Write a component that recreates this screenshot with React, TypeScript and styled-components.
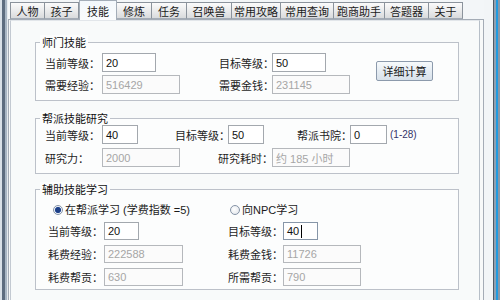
import React from 'react';
import styled, { createGlobalStyle } from 'styled-components';

const GlobalStyle = createGlobalStyle`
  html, body { margin: 0; padding: 0; }
  body {
    width: 500px;
    height: 300px;
    overflow: hidden;
    font-family: "Liberation Sans", "Noto Sans CJK SC", sans-serif;
    font-size: 11px;
    color: #1b1b1b;
    background: #f3f6f8;
  }
`;

const tabs = [
  { name: '人物', w: 35 },
  { name: '孩子', w: 34 },
  { name: '技能', w: 38, active: true },
  { name: '修炼', w: 35 },
  { name: '任务', w: 35 },
  { name: '召唤兽', w: 45 },
  { name: '常用攻略', w: 49 },
  { name: '常用查询', w: 53 },
  { name: '跑商助手', w: 51 },
  { name: '答题器', w: 44 },
  { name: '关于', w: 34 },
];

const App: React.FC = () => {
  return (
    <>
      <GlobalStyle />
      <Window>
        <LeftFrame />
        <Main>
          <TabStrip>
            {tabs.map((t) => (
              <Tab key={t.name} $w={t.w} $active={!!t.active}>
                {t.name}
              </Tab>
            ))}
          </TabStrip>
          <Page>
            <Panel>
              <Group>
                <Legend>师门技能</Legend>
                <GroupBody $top={4} $bottom={6} $left={9}>
                  <FieldGrid>
                    <Label>当前等级：</Label>
                    <Box $w={54}>20</Box>
                    <Label>目标等级：</Label>
                    <Box $w={54}>50</Box>
                    <Label>需要经验：</Label>
                    <Box $w={78} $disabled>516429</Box>
                    <Label>需要金钱：</Label>
                    <Box $w={78} $disabled>231145</Box>
                  </FieldGrid>
                  <CalcButton>详细计算</CalcButton>
                </GroupBody>
              </Group>

              <Group $gap={10}>
                <Legend>帮派技能研究</Legend>
                <GroupColumn $top={0} $bottom={6} $left={9} $rowGap={4}>
                  <Row>
                    <Label $w={57}>当前等级：</Label>
                    <Box $w={36}>40</Box>
                    <Label $w={53} $ml={37}>目标等级：</Label>
                    <Box $w={36}>50</Box>
                    <Label $w={53} $ml={33}>帮派书院：</Label>
                    <Box $w={37}>0</Box>
                    <Hint>(1-28)</Hint>
                  </Row>
                  <Row>
                    <Label $w={57}>研究力：</Label>
                    <Box $w={78} $disabled>2000</Box>
                    <Label $w={54} $ml={38}>研究耗时：</Label>
                    <Box $w={78} $disabled>约 185 小时</Box>
                  </Row>
                </GroupColumn>
              </Group>

              <Group $gap={8}>
                <Legend>辅助技能学习</Legend>
                <GroupColumn $top={7} $bottom={3} $left={12} $rowGap={5}>
                  <RadioRow>
                    <RadioOption $w={177}>
                      <Radio $checked />
                      <span>在帮派学习 (学费指数 =5)</span>
                    </RadioOption>
                    <RadioOption>
                      <Radio />
                      <span>向NPC学习</span>
                    </RadioOption>
                  </RadioRow>
                  <Row $h={18}>
                    <Label $w={56}>当前等级：</Label>
                    <Box $w={35} $h={18}>20</Box>
                    <Label $w={55} $ml={89}>目标等级：</Label>
                    <Box $w={35} $h={18} $focused>
                      40<Caret />
                    </Box>
                  </Row>
                  <Row $h={18}>
                    <Label $w={56}>耗费经验：</Label>
                    <Box $w={79} $h={18} $disabled>222588</Box>
                    <Label $w={55} $ml={45}>耗费金钱：</Label>
                    <Box $w={78} $h={18} $disabled>11726</Box>
                  </Row>
                  <Row $h={18}>
                    <Label $w={56}>耗费帮贡：</Label>
                    <Box $w={79} $h={18} $disabled>630</Box>
                    <Label $w={55} $ml={45}>所需帮贡：</Label>
                    <Box $w={78} $h={18} $disabled>790</Box>
                  </Row>
                </GroupColumn>
              </Group>
            </Panel>
          </Page>
        </Main>
        <RightFrame />
      </Window>
    </>
  );
};

// Styled components
const Window = styled.div`
  display: flex;
  width: 500px;
  height: 300px;
`;

const LeftFrame = styled.div`
  flex: none;
  width: 8px;
  background: linear-gradient(
    to right,
    #d9e1e8 0 2px,
    #5d6d80 2px 5px,
    #a9b7c5 5px 7px,
    #e6ebef 7px 8px
  );
`;

const RightFrame = styled.div`
  flex: none;
  width: 16px;
  background: linear-gradient(
    to right,
    #f2f5f7 0 9px,
    #4f5a66 9px 10px,
    #8fa0b2 10px 12px,
    #1f9be0 12px 14px,
    #8a98a8 14px 16px
  );
`;

const Main = styled.div`
  flex: 1;
  display: flex;
  flex-direction: column;
  min-width: 0;
  background: #f3f6f8;
`;

const TabStrip = styled.div`
  display: flex;
  align-items: flex-end;
  height: 19px;
  padding-left: 2px;
`;

const Tab = styled.div<{ $w: number; $active: boolean }>`
  flex: none;
  box-sizing: border-box;
  width: ${(p) => p.$w}px;
  height: ${(p) => (p.$active ? 20 : 17)}px;
  margin-bottom: ${(p) => (p.$active ? -1 : 0)}px;
  position: relative;
  z-index: ${(p) => (p.$active ? 2 : 1)};
  display: flex;
  align-items: center;
  justify-content: center;
  font-family: "Noto Sans CJK SC", sans-serif;
  font-size: 11px;
  line-height: 14px;
  color: #1a1a1a;
  border: 1px solid ${(p) => (p.$active ? '#a3adb8' : '#8b939c')};
  border-bottom: ${(p) => (p.$active ? 'none' : '1px solid #a4acb6')};
  border-left-width: ${(p) => (p.$active ? 1 : 0)}px;
  &:first-child {
    border-left-width: 1px;
  }
  background: ${(p) =>
    p.$active
      ? 'linear-gradient(#f3f8fc, #fafcfd)'
      : 'linear-gradient(#fbfbfb, #e9eaeb 55%, #d9dbdd)'};
`;

const Page = styled.div`
  flex: 1;
  display: flex;
  border: 1px solid #a4acb6;
  border-bottom: none;
  background: #f7f9f9;
`;

const Panel = styled.div`
  flex: 1;
  display: flex;
  flex-direction: column;
  margin: 0 3px 0 1px;
  padding: 14px 20px 0 24px;
  border-left: 1px solid #c3c9d1;
  border-right: 1px solid #b7bfc8;
  border-top: 1px solid #e2e6ea;
  background: #f8fafa;
`;

const Group = styled.fieldset<{ $gap?: number }>`
  box-sizing: border-box;
  width: 424px;
  margin: ${(p) => p.$gap ?? 0}px 0 0;
  padding: 0;
  min-width: 0;
  border: 1px solid #bcc1c9;
  background: #fcfdfd;
`;

const Legend = styled.legend`
  margin-left: 4px;
  padding: 0 2px;
  font-family: "Noto Sans CJK SC", sans-serif;
  font-size: 11px;
  line-height: 14px;
  color: #111;
  background: #fcfdfd;
`;

const GroupBody = styled.div<{ $top: number; $bottom: number; $left: number }>`
  display: flex;
  align-items: flex-start;
  padding: ${(p) => p.$top}px 0 ${(p) => p.$bottom}px ${(p) => p.$left}px;
`;

const GroupColumn = styled.div<{
  $top: number;
  $bottom: number;
  $left: number;
  $rowGap: number;
}>`
  display: flex;
  flex-direction: column;
  gap: ${(p) => p.$rowGap}px;
  padding: ${(p) => p.$top}px 0 ${(p) => p.$bottom}px ${(p) => p.$left}px;
`;

const FieldGrid = styled.div`
  display: grid;
  grid-template-columns: 57px 117px 53px 104px;
  grid-auto-rows: 19px;
  row-gap: 3px;
  align-items: center;
  justify-items: start;
`;

const Row = styled.div<{ $h?: number }>`
  display: flex;
  align-items: center;
  height: ${(p) => p.$h ?? 19}px;
`;

const Label = styled.span<{ $w?: number; $ml?: number }>`
  flex: none;
  width: ${(p) => (p.$w ? `${p.$w}px` : 'auto')};
  margin-left: ${(p) => p.$ml ?? 0}px;
  white-space: nowrap;
  font-family: "Noto Sans CJK SC", sans-serif;
  font-size: 11px;
  line-height: 14px;
  color: #1e1e1e;
`;

const Box = styled.div<{ $w: number; $h?: number; $disabled?: boolean; $focused?: boolean }>`
  flex: none;
  box-sizing: border-box;
  width: ${(p) => p.$w}px;
  height: ${(p) => p.$h ?? 19}px;
  display: flex;
  align-items: center;
  padding-left: 3px;
  white-space: nowrap;
  font-family: "Liberation Sans", "Noto Sans CJK SC", sans-serif;
  font-size: 11px;
  color: ${(p) => (p.$disabled ? '#a6a6a6' : '#111')};
  background: ${(p) => (p.$disabled ? '#fbfbfb' : '#ffffff')};
  border: 1px solid
    ${(p) => (p.$focused ? '#8796a8' : p.$disabled ? '#b5b8bc' : '#a3a8ae')};
`;

const Caret = styled.span`
  display: inline-block;
  width: 1px;
  height: 13px;
  margin-left: 2px;
  background: #000;
`;

const Hint = styled.span`
  margin-left: 3px;
  font-size: 10px;
  color: #34346a;
  white-space: nowrap;
`;

const CalcButton = styled.div`
  flex: none;
  box-sizing: border-box;
  width: 57px;
  height: 20px;
  margin-top: 8px;
  display: flex;
  align-items: center;
  justify-content: center;
  font-family: "Noto Sans CJK SC", sans-serif;
  font-size: 11px;
  color: #1a1a1a;
  border: 1px solid #8c9aac;
  border-radius: 2px;
  background: linear-gradient(#f7fafc, #e6edf3 50%, #d8e1ea);
`;

const RadioRow = styled.div`
  display: flex;
  align-items: center;
  height: 14px;
  padding-left: 5px;
`;

const RadioOption = styled.div<{ $w?: number }>`
  flex: none;
  width: ${(p) => (p.$w ? `${p.$w}px` : 'auto')};
  display: flex;
  align-items: center;
  gap: 2px;
  white-space: nowrap;
  font-family: "Liberation Sans", "Noto Sans CJK SC", sans-serif;
  font-size: 11px;
  line-height: 14px;
  color: #1a1a1a;
`;

const Radio = styled.span<{ $checked?: boolean }>`
  flex: none;
  box-sizing: border-box;
  width: 10px;
  height: 10px;
  border-radius: 50%;
  border: 1px solid #8593a6;
  background: ${(p) =>
    p.$checked
      ? 'radial-gradient(circle, #1d3f86 0 2.5px, #5f7fc0 3px, #eef2f7 3.5px)'
      : 'radial-gradient(circle at 40% 40%, #ffffff, #dde2e8)'};
`;

export default App;
